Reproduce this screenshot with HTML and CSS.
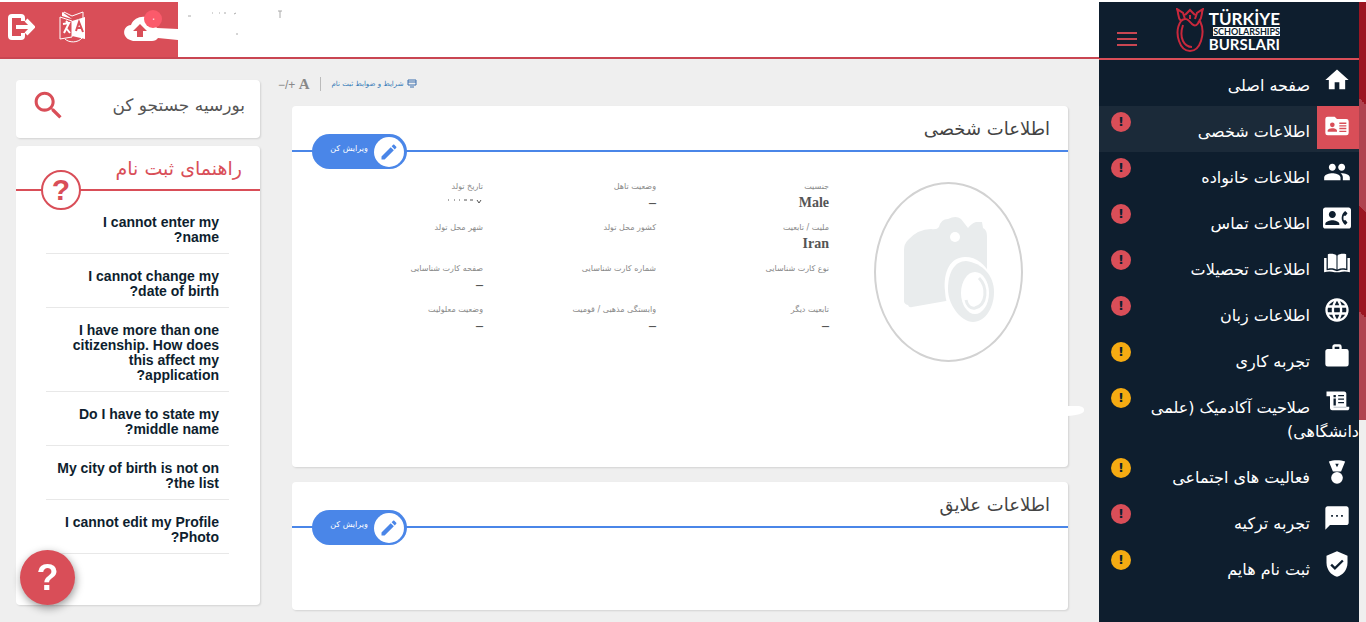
FILE: index.html
```
<!DOCTYPE html>
<html lang="fa" dir="rtl">
<head>
  <meta charset="UTF-8">
  <meta name="viewport" content="width=device-width, initial-scale=1.0">
  <title>Türkiye Bursları</title>
  <link rel="stylesheet" href="styles.css">
</head>
<body>
  <!-- Icon definitions -->
  <svg class="sprite" aria-hidden="true">
    <symbol id="i-home" viewBox="0 0 24 24"><path d="M10 20v-6h4v6h5v-8h3L12 3 2 12h3v8z"/></symbol>
    <symbol id="i-id" viewBox="0 0 24 24"><path fill-rule="evenodd" d="M4 4h6l2 2h8a2 2 0 0 1 2 2v10a2 2 0 0 1-2 2H4a2 2 0 0 1-2-2V6a2 2 0 0 1 2-2zM8 9a2 2 0 1 0 0 4 2 2 0 0 0 0-4zM4 17h8v-1c0-1.300-2.700-2-4-2s-4 .7-4 2zM14 9v1.200h6V9zM14 11.300v1.200h6v-1.200zM14 13.600v1.200h6v-1.200zM14 16v1.200h6V16z"/></symbol>
    <symbol id="i-group" viewBox="0 0 24 24"><path d="M16 11c1.660 0 2.990-1.340 2.990-3S17.660 5 16 5c-1.660 0-3 1.340-3 3s1.340 3 3 3zm-8 0c1.660 0 2.990-1.340 2.990-3S9.660 5 8 5C6.340 5 5 6.340 5 8s1.340 3 3 3zm0 2c-2.330 0-7 1.170-7 3.500V19h14v-2.500c0-2.330-4.670-3.500-7-3.500zm8 0c-.29 0-.62.02-.97.05 1.160.84 1.970 1.970 1.970 3.450V19h6v-2.500c0-2.330-4.670-3.500-7-3.500z"/></symbol>
    <symbol id="i-contact" viewBox="0 0 24 24"><path d="M22 3H2C.9 3 0 3.900 0 5v14c0 1.100.9 2 2 2h20c1.100 0 1.990-.9 1.990-2L24 5c0-1.100-.9-2-2-2zM8 6c1.660 0 3 1.340 3 3s-1.340 3-3 3-3-1.340-3-3 1.340-3 3-3zm6 12H2v-1c0-2 4-3.100 6-3.100s6 1.100 6 3.100v1zm3.850-4h1.640L21 16l-1.990 1.990c-1.310-.98-2.280-2.380-2.730-3.990-.18-.64-.28-1.310-.28-2s.1-1.360.28-2c.45-1.620 1.420-3.010 2.730-3.990L21 8l-1.510 2h-1.640c-.22.63-.35 1.300-.35 2s.13 1.370.35 2z"/></symbol>
    <symbol id="i-book" viewBox="-1 -1 26 26"><path d="M3.500 3C6.500 2.200 9.500 2.600 11.500 4v13.200c-2.300-1.300-5.200-1.500-8-.8zM20.500 3c-3-.8-6-.4-8 1v13.200c2.300-1.300 5.200-1.500 8-.8zM0 6.500h2.300v11.300c3.700-.9 6.800-.5 9.700 1 2.900-1.500 6-1.900 9.700-1V6.500H24v13.200c-3.300-1-6.700-1-9.700 0h-4.600c-3-1-6.400-1-9.700 0z"/></symbol>
    <symbol id="i-globe" viewBox="0 0 24 24"><path d="M11.990 2C6.470 2 2 6.480 2 12s4.470 10 9.990 10C17.520 22 22 17.520 22 12S17.520 2 11.990 2zm6.930 6h-2.950c-.32-1.250-.78-2.450-1.380-3.560 1.840.63 3.370 1.910 4.330 3.560zM12 4.040c.83 1.200 1.480 2.530 1.910 3.960h-3.820c.43-1.430 1.080-2.760 1.910-3.960zM4.260 14C4.100 13.360 4 12.690 4 12s.1-1.360.26-2h3.380c-.08.66-.14 1.320-.14 2 0 .68.06 1.340.14 2H4.260zm.82 2h2.950c.32 1.250.78 2.450 1.380 3.560-1.840-.63-3.370-1.900-4.330-3.560zm2.950-8H5.080c.96-1.660 2.490-2.930 4.330-3.560C8.810 5.550 8.350 6.750 8.030 8zM12 19.960c-.83-1.200-1.480-2.530-1.910-3.960h3.820c-.43 1.430-1.080 2.760-1.910 3.960zM14.340 14H9.660c-.09-.66-.16-1.320-.16-2 0-.68.07-1.350.16-2h4.680c.09.65.16 1.320.16 2 0 .68-.07 1.340-.16 2zm.25 5.560c.6-1.110 1.060-2.310 1.380-3.560h2.950c-.96 1.650-2.490 2.930-4.330 3.560zM16.360 14c.08-.66.14-1.320.14-2 0-.68-.06-1.340-.14-2h3.380c.16.64.26 1.310.26 2s-.1 1.360-.26 2h-3.380z"/></symbol>
    <symbol id="i-work" viewBox="0 0 24 24"><path fill-rule="evenodd" d="M10 2h4a2 2 0 0 1 2 2v2h4a2 2 0 0 1 2 2v11a2 2 0 0 1-2 2H4a2 2 0 0 1-2-2V8c0-1.100.9-2 2-2h4V4c0-1.100.9-2 2-2zm4 4V4h-4v2h4z"/></symbol>
    <symbol id="i-scroll" viewBox="0 0 24 24"><path fill-rule="evenodd" d="M3 3h15c1.400 0 2 .8 2 2v11h2.500v1.500c0 1.100-.8 1.500-1.500 1.500H8c-1.500 0-2-.8-2-2V7H3zM9 6v2h2V6zM9 9v6h2V9zM13 6v1h5V6zM13 9v1h5V9zM13 12v1h5v-1z"/><path fill="#c5cbd0" d="M9 16h11v1H9z"/></symbol>
    <symbol id="i-medal" viewBox="0 0 24 24"><path fill-rule="evenodd" d="M5 3c4-1.300 10-1.300 14 0l-3.500 8.500h-7zM10.500 5l1.500 3 1.500-3z"/><circle cx="12" cy="17" r="5"/></symbol>
    <symbol id="i-chat" viewBox="0 0 24 24"><path d="M20 2H4c-1.100 0-1.990.9-1.990 2L2 22l4-4h14c1.100 0 2-.9 2-2V4c0-1.100-.9-2-2-2zM8.500 11H7V9.500h1.500zm4.250 0h-1.500V9.500h1.500zm4.250 0h-1.500V9.500H17z"/></symbol>
    <symbol id="i-shield" viewBox="0 0 24 24"><path d="M12 1L3 5v6c0 5.550 3.840 10.740 9 12 5.160-1.260 9-6.450 9-12V5z"/><path class="shield-tick" d="M7 12.500l3.200 3.200L17 9"/></symbol>
    <symbol id="i-pencil" viewBox="0 0 24 24"><path d="M3 17.250V21h3.750L17.810 9.940l-3.750-3.750L3 17.250zM20.710 7.040c.39-.39.39-1.020 0-1.410l-2.340-2.340c-.39-.39-1.020-.39-1.410 0l-1.830 1.830 3.750 3.750 1.830-1.830z"/></symbol>
    <symbol id="i-search" viewBox="0 0 24 24"><path d="M15.500 14h-.79l-.28-.27C15.410 12.590 16 11.110 16 9.500 16 5.910 13.090 3 9.500 3S3 5.910 3 9.500 5.910 16 9.500 16c1.610 0 3.090-.59 4.230-1.570l.27.28v.79l5 4.990L20.490 19l-4.990-5zm-6 0C7.010 14 5 11.990 5 9.500S7.010 5 9.500 5 14 7.010 14 9.500 11.990 14 9.500 14z"/></symbol>
  </svg>

  <!-- Sidebar -->
  <aside class="sidebar">
    <div class="sidebar-header">
      <a class="logo" href="#" dir="ltr">
        <svg class="logo-mark" viewBox="0 0 28 44">
          <path d="M9 11L7 5 1 1c2 4 0 8 4 12M19 11l2-6 6-4c-2 4 0 8-4 12M9 7l5-5 5 5M14 7v4M5 13c5-5 8 0 11 3 3 3 6 1 7-3M5 13c-4 6-4 14-2 20 2 6 6 10 11 10s9-4 11-10c2-6 2-14-1-20M7 17c-2 6-2 12 0 16 2 4 5 6 9 6"/>
        </svg>
        <span class="logo-text">
          <span class="logo-top">TÜRKİYE</span>
          <span class="logo-middle">SCHOLARSHIPS</span>
          <span class="logo-bottom">BURSLARI</span>
        </span>
      </a>
      <button class="menu-toggle" type="button" aria-label="منو"><span></span><span></span><span></span></button>
    </div>
    <ul class="menu">
      <li><a href="#"><svg class="icon"><use href="#i-home"/></svg><span class="label">صفحه اصلی</span></a></li>
      <li class="active"><a href="#"><svg class="icon"><use href="#i-id"/></svg><span class="label">اطلاعات شخصی</span><b class="badge">!</b></a></li>
      <li><a href="#"><svg class="icon"><use href="#i-group"/></svg><span class="label">اطلاعات خانواده</span><b class="badge">!</b></a></li>
      <li><a href="#"><svg class="icon"><use href="#i-contact"/></svg><span class="label">اطلاعات تماس</span><b class="badge">!</b></a></li>
      <li><a href="#"><svg class="icon"><use href="#i-book"/></svg><span class="label">اطلاعات تحصیلات</span><b class="badge">!</b></a></li>
      <li><a href="#"><svg class="icon"><use href="#i-globe"/></svg><span class="label">اطلاعات زبان</span><b class="badge">!</b></a></li>
      <li><a href="#"><svg class="icon"><use href="#i-work"/></svg><span class="label">تجربه کاری</span><b class="badge optional">!</b></a></li>
      <li><a href="#"><svg class="icon"><use href="#i-scroll"/></svg><span class="label">صلاحیت آکادمیک (علمی دانشگاهی)</span><b class="badge optional">!</b></a></li>
      <li><a href="#"><svg class="icon"><use href="#i-medal"/></svg><span class="label">فعالیت های اجتماعی</span><b class="badge optional">!</b></a></li>
      <li><a href="#"><svg class="icon"><use href="#i-chat"/></svg><span class="label">تجربه ترکیه</span><b class="badge">!</b></a></li>
      <li><a href="#"><svg class="icon"><use href="#i-shield"/></svg><span class="label">ثبت نام هایم</span><b class="badge optional">!</b></a></li>
    </ul>
  </aside>

  <!-- Main Content -->
  <div class="main-content">
    <header class="topbar">
      <svg class="user-info" viewBox="0 0 110 40">
        <path d="M100 9h4M102 9v7M10 14h3M34 11h1M41 11h1M46 11h2M56 12l2-1M59 31v2"/>
      </svg>
      <div class="actions">
        <button type="button" aria-label="آپلود" class="upload">
          <svg viewBox="0 0 56 44">
            <path fill="#fff" d="M11 34C-1 32 0 19 9 18 13 8 27 7 31 16l4 5 21 1v11l-20-2q-2 3-6 3z"/>
            <path fill="#d94e58" d="M18 17l7 7h-4v6h-6v-6h-4z"/>
          </svg>
          <span class="count">۰</span>
        </button>
        <button type="button" aria-label="زبان">
          <svg viewBox="0 0 28 32">
            <g fill="none" stroke="#fff">
              <path d="M1 6l12 4v16L1 28zM4 5l1-4 8 4 11-4v6M6 28c4 4 13 4 17-1"/>
              <path stroke-width="2" d="M4 13l6-1-5 10M7 10l2 2M7 17l4 5"/>
            </g>
            <path fill="#fff" d="M13 10l13-4v22l-13-3zM3 1v4l10 3z"/>
            <path fill="none" stroke="#d94e58" stroke-width="2" d="M17 20l3-9 4 10M18 17h5"/>
          </svg>
        </button>
        <button type="button" aria-label="خروج">
          <svg viewBox="0 0 28 32">
            <path fill="none" stroke="#fff" stroke-width="4" d="M16 10V7q0-2-2-2H5Q3 5 3 7v18q0 2 2 2h9q2 0 2-2v-3M9 16h15M19 9l7 7-7 7"/>
          </svg>
        </button>
      </div>
    </header>

    <div class="content">
      <main class="profile">
        <div class="toolbar">
          <a href="#">
            <svg viewBox="0 0 10 10"><path d="M1 1h8v5H1zM1 3h8M3 8h4"/></svg>
            شرایط و ضوابط ثبت نام
          </a>
          <button type="button" class="font-size"><b>A</b> +/−</button>
        </div>

        <section class="card personal">
          <div class="card-header">
            <h2>اطلاعات شخصی</h2>
            <button class="edit" type="button"><span class="edit-icon"><svg><use href="#i-pencil"/></svg></span><span class="edit-label">ویرایش کن</span></button>
          </div>
          <div class="card-body">
            <div class="photo">
              <svg viewBox="0 0 90 110">
                <path fill="#e9eced" d="M0 33Q0 27 4 23 14 12 27 12q6 1 8-2 2-8 9-8 8-4 13 0 4 5 7 9 4-5 8-6h6l1 6q4 2 4 8v65H42l-34 6q-3 1-4-2-4-1-4-4z"/>
                <circle fill="#fff" cx="51" cy="20" r="5"/>
                <path fill="#fff" d="M41 74c-2-20 6-34 20-34 12 0 20 7 27 20v45H54c-6-5-12-14-13-31z"/>
                <path fill="#e9eced" d="M44 72c0-17 7-28 18-28 16 2 28 14 28 31 0 16-9 30-21 30S44 88 44 72z"/>
                <ellipse fill="#fff" cx="71" cy="76" rx="14" ry="21"/>
                <path fill="none" stroke="#e9eced" stroke-width="3" d="M75 61c9 9 8 27-4 30-5 1-8-3-9-8"/>
              </svg>
            </div>
            <dl class="fields">
              <div><dt>جنسیت</dt><dd>Male</dd></div>
              <div><dt>وضعیت تاهل</dt><dd>–</dd></div>
              <div><dt>تاریخ تولد</dt><dd><svg class="masked" viewBox="0 0 40 12"><path d="M34 5l2 3 2-3M27 5h3M21 5h3M16 5h1M11 5h1M5 5h1"/></svg></dd></div>
              <div><dt>ملیت / تابعیت</dt><dd>Iran</dd></div>
              <div><dt>کشور محل تولد</dt><dd></dd></div>
              <div><dt>شهر محل تولد</dt><dd></dd></div>
              <div><dt>نوع کارت شناسایی</dt><dd></dd></div>
              <div><dt>شماره کارت شناسایی</dt><dd></dd></div>
              <div><dt>صفحه کارت شناسایی</dt><dd>–</dd></div>
              <div><dt>تابعیت دیگر</dt><dd>–</dd></div>
              <div><dt>وابستگی مذهبی / قومیت</dt><dd>–</dd></div>
              <div><dt>وضعیت معلولیت</dt><dd>–</dd></div>
            </dl>
          </div>
          <svg class="eraser" viewBox="0 0 18 12"><path d="M0 1h12q6 1 5 5-1 4-17 5z"/></svg>
        </section>

        <section class="card interests">
          <div class="card-header">
            <h2>اطلاعات علایق</h2>
            <button class="edit" type="button"><span class="edit-icon"><svg><use href="#i-pencil"/></svg></span><span class="edit-label">ویرایش کن</span></button>
          </div>
        </section>
      </main>

      <div class="side">
        <form class="card search">
          <input type="text" placeholder="بورسیه جستجو کن" aria-label="بورسیه جستجو کن">
          <button type="submit" aria-label="جستجو"><svg><use href="#i-search"/></svg></button>
        </form>
        <section class="card guide">
          <div class="card-header">
            <h2>راهنمای ثبت نام</h2>
            <span class="question">?</span>
          </div>
          <ul>
            <li><a href="#">I cannot enter my name?</a></li>
            <li><a href="#">I cannot change my date of birth?</a></li>
            <li><a href="#">I have more than one citizenship. How does this affect my application?</a></li>
            <li><a href="#">Do I have to state my middle name?</a></li>
            <li><a href="#">My city of birth is not on the list?</a></li>
            <li><a href="#">I cannot edit my Profile Photo?</a></li>
          </ul>
        </section>
      </div>
    </div>
  </div>

  <button class="help-button" type="button">?</button>
</body>
</html>
```
FILE: styles.css
```
/* General Reset */
* {
  margin: 0;
  padding: 0;
  box-sizing: border-box;
}

button {
  border: none;
  background: none;
  cursor: pointer;
}

a {
  text-decoration: none;
}

ul {
  list-style: none;
}

/* Body Styling */
body {
  display: flex;
  min-height: 100vh;
  border-top: 2px solid #fff;
  padding-right: 7px;
  background:
    linear-gradient(#9b1521, #9b1521) right top / 7px 98px no-repeat,
    linear-gradient(45deg, #af4450 50%, #9b1521 50%) right 98px / 7px 7px no-repeat,
    linear-gradient(#af4450, #af4450) right 105px / 7px 100px no-repeat,
    linear-gradient(45deg, #9b1521 50%, #af4450 50%) right 205px / 7px 7px no-repeat,
    linear-gradient(#9b1521, #9b1521) right 212px / 7px 99px no-repeat,
    linear-gradient(45deg, #af4450 50%, #9b1521 50%) right 311px / 7px 7px no-repeat,
    linear-gradient(#af4450, #af4450) right 318px / 7px 102px no-repeat,
    #efefef;
  font-family: "DejaVu Sans", sans-serif;
}

.sprite {
  position: absolute;
  width: 0;
  height: 0;
}

/* Sidebar Styling */
.sidebar {
  flex: 0 0 260px;
  background-color: #0e1e2e;
  overflow: hidden;
}

.sidebar-header {
  display: flex;
  justify-content: space-between;
  align-items: flex-start;
  height: 58px;
  padding: 6px 79px 0 18px;
  border-bottom: 2px solid #d94e58;
}

.logo {
  display: flex;
  gap: 4px;
  color: #fff;
  font-family: Lato, sans-serif;
  font-weight: bold;
}

.logo-mark {
  width: 28px;
  height: 44px;
  fill: none;
  stroke: #c8283c;
  stroke-width: 2;
}

.logo-text {
  display: flex;
  flex-direction: column;
  align-items: flex-end;
  width: 72px;
}

.logo-top {
  margin-top: 2px;
  font-size: 17px;
  line-height: 17px;
}

.logo-middle {
  background-color: #fff;
  color: #0e1e2e;
  font-size: 9px;
  line-height: 9px;
}

.logo-bottom {
  font-size: 15px;
  line-height: 17px;
}

.menu-toggle {
  display: flex;
  flex-direction: column;
  gap: 4px;
  width: 20px;
  margin-top: 24px;
}

.menu-toggle span {
  height: 2px;
  background-color: #c94652;
}

.menu a {
  display: grid;
  color: #fff;
  font-size: 16px;
  line-height: 24px;
}

.menu a > * {
  grid-area: 1 / 1;
}

.menu .active {
  background-color: #1b2a39;
}

.icon {
  width: 42px;
  height: 43px;
  padding: 6px 8px 9px 6px;
  fill: #fff;
}

.active .icon {
  background-color: #d94e58;
}

.shield-tick {
  fill: none;
  stroke: #0e1e2e;
  stroke-width: 2;
}

.label {
  margin-left: 36px;
  padding: 14px 0 8px;
  text-indent: 49px;
}

.badge {
  justify-self: end;
  width: 20px;
  height: 20px;
  margin: 6px 0 0 12px;
  border-radius: 50%;
  background-color: #d94e58;
  color: #0e1e2e;
  font-size: 13px;
  line-height: 20px;
  text-align: center;
}

.badge.optional {
  background-color: #f5ab12;
}

/* Main Content Styling */
.main-content {
  flex: 1;
  min-width: 0;
}

.topbar {
  display: flex;
  justify-content: space-between;
  height: 57px;
  background-color: #fff;
  border-bottom: 2px solid #c94652;
}

.user-info {
  width: 110px;
  height: 40px;
  margin-right: auto;
  fill: none;
  stroke: #aaa;
}

.actions {
  display: flex;
  align-items: flex-start;
  width: 178px;
  padding-top: 9px;
  background-color: #d94e58;
}

.actions svg {
  display: block;
  width: 28px;
  height: 32px;
}

.actions button {
  margin-left: 24px;
}

.actions button:last-child {
  margin-left: 0;
}

.actions .upload {
  position: relative;
  margin: -4px 0 0 35px;
}

.actions .upload svg {
  width: 56px;
  height: 44px;
}

.count {
  position: absolute;
  top: 3px;
  left: 22px;
  width: 18px;
  height: 18px;
  border-radius: 50%;
  background-color: #fb5a6b;
  color: #fff;
  font-size: 10px;
  line-height: 18px;
}

.content {
  display: flex;
  gap: 32px;
  padding: 17px 31px 12px 16px;
}

.profile {
  flex: 1;
}

.toolbar {
  display: flex;
  justify-content: flex-end;
  align-items: center;
  height: 16px;
  margin: 0 0 14px -14px;
}

.toolbar a {
  display: flex;
  align-items: center;
  gap: 3px;
  padding-left: 11px;
  border-left: 1px solid #bbb;
  color: #337ab7;
  font-size: 7px;
  line-height: 14px;
}

.toolbar svg {
  width: 10px;
  height: 10px;
  fill: none;
  stroke: #3a6fae;
}

.font-size {
  padding-right: 10px;
  color: #888;
  font: 12px "Liberation Sans", sans-serif;
}

.font-size b {
  font: bold 15px "Liberation Serif", serif;
}

/* Cards */
.card {
  background-color: #fff;
  border-radius: 4px;
  box-shadow: 1px 1px 2px rgba(0, 0, 0, 0.12);
}

.card-header {
  display: flex;
  justify-content: space-between;
  align-items: flex-end;
  height: 46px;
  padding: 0 18px 0 20px;
  border-bottom: 2px solid #4a86e8;
}

.card-header h2 {
  align-self: center;
  color: #444;
  font-size: 18px;
  font-weight: normal;
}

.edit {
  display: flex;
  align-items: center;
  width: 95px;
  height: 35px;
  margin-bottom: -19px;
  padding: 0 3px 0 12px;
  border-radius: 18px;
  background-color: #4a86e8;
}

.edit-icon {
  width: 30px;
  height: 30px;
  padding: 5px;
  border-radius: 50%;
  background-color: #fff;
}

.edit-icon svg {
  display: block;
  width: 20px;
  height: 20px;
  fill: #4a86e8;
}

.edit-label {
  flex: 1;
  padding-bottom: 6px;
  color: #fff;
  font-family: "DejaVu Sans", sans-serif;
  font-size: 8px;
  white-space: nowrap;
}

.personal {
  position: relative;
  padding-bottom: 105px;
  margin-bottom: 15px;
}

.interests {
  padding-bottom: 82px;
}

.card-body {
  display: flex;
  align-items: flex-start;
  gap: 45px;
  padding: 26px 45px 0 18px;
}

.photo {
  display: flex;
  justify-content: center;
  align-items: center;
  width: 149px;
  height: 180px;
  margin-top: 4px;
  border: 2px solid #d2d2d2;
  border-radius: 50%;
}

.photo svg {
  width: 90px;
  height: 110px;
}

.fields {
  flex: 1;
  display: grid;
  grid-template-columns: repeat(3, 1fr);
  row-gap: 9px;
}

.fields dt {
  color: #888;
  font-size: 8px;
  line-height: 17px;
}

.fields dd {
  height: 15px;
  color: #555;
  font: bold 14px/15px "Liberation Serif", serif;
}

.masked {
  width: 40px;
  height: 12px;
  fill: none;
  stroke: #555;
}

.eraser {
  position: absolute;
  top: 299px;
  right: -17px;
  width: 18px;
  height: 12px;
  fill: #fff;
}

/* Search and guide column */
.side {
  width: 244px;
  padding-top: 4px;
}

.search {
  display: flex;
  align-items: center;
  height: 58px;
  margin-bottom: 8px;
  padding: 0 15px 8px 14px;
}

.search input {
  flex: 1;
  min-width: 0;
  border: none;
  outline: none;
  font: 17px "DejaVu Sans", sans-serif;
}

.search input::placeholder {
  color: #555;
}

.search svg {
  display: block;
  width: 37px;
  height: 37px;
  fill: #d94e58;
}

.guide {
  padding-bottom: 51px;
}

.guide .card-header {
  height: 45px;
  padding-left: 25px;
  border-color: #d94e58;
}

.guide h2 {
  color: #d94e58;
  font-size: 19px;
}

.question {
  width: 40px;
  height: 40px;
  margin-bottom: -21px;
  border: 2px solid #d94e58;
  border-radius: 50%;
  background-color: #fff;
  color: #d94e58;
  font: bold 30px/36px "Liberation Sans", sans-serif;
  text-align: center;
}

.guide ul {
  padding: 9px 31px 0 30px;
}

.guide li {
  padding: 15px 10px 8px;
  border-bottom: 1px solid #e8e8e8;
}

.guide li a {
  display: block;
  color: #0e1e2e;
  font: bold 14px/15px "Liberation Sans", sans-serif;
}

/* Floating help */
.help-button {
  position: fixed;
  bottom: 17px;
  left: 20px;
  width: 55px;
  height: 55px;
  border-radius: 50%;
  background-color: #d94e58;
  box-shadow: 1px 3px 8px rgba(0, 0, 0, 0.4);
  color: #fff;
  font: bold 36px "Liberation Sans", sans-serif;
}
```
